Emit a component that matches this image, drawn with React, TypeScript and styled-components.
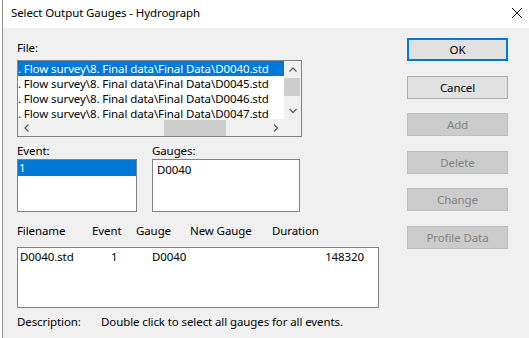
import React from "react";
import styled, { createGlobalStyle } from "styled-components";

const Global = createGlobalStyle`
  html, body { margin: 0; padding: 0; background: #ffffff; }
  body {
    font-family: "Noto Sans", "Open Sans", sans-serif;
    font-size: 11.5px;
    letter-spacing: -0.1px;
    color: #000;
  }
  * { box-sizing: border-box; }
`;

const Window = styled.div`
  width: 527px;
  height: 338px;
  margin-left: 2px;
  border-left: 1px solid #8f8f8f;
  display: flex;
  flex-direction: column;
  overflow: hidden;
`;

const TitleBar = styled.div`
  height: 28px;
  flex: 0 0 28px;
  background: #ffffff;
  display: flex;
  justify-content: space-between;
  align-items: flex-start;
  padding: 5px 7px 0 8px;
`;

const Title = styled.span`
  line-height: 16px;
`;

const CloseIcon = styled.svg`
  margin-top: 3px;
  width: 10px;
  height: 10px;
`;

const Body = styled.div`
  flex: 1;
  background: #f0f0f0;
  display: flex;
  padding-left: 14px;
`;

const ContentCol = styled.div`
  width: 362px;
  padding-top: 12px;
  display: flex;
  flex-direction: column;
`;

const ButtonCol = styled.div`
  width: 101px;
  margin-left: 28px;
  padding-top: 10px;
  display: flex;
  flex-direction: column;
  gap: 14px;
`;

const Label = styled.div<{ $mb?: number }>`
  height: 16px;
  line-height: 16px;
  margin-bottom: ${(p) => p.$mb ?? 0}px;
  white-space: nowrap;
`;

const ListFrame = styled.div<{ $w: number; $h: number }>`
  width: ${(p) => p.$w}px;
  height: ${(p) => p.$h}px;
  border: 1px solid #828282;
  background: #ffffff;
  overflow: hidden;
`;

const FileGrid = styled.div`
  display: grid;
  grid-template-columns: minmax(0, 1fr) 17px;
  grid-template-rows: minmax(0, 1fr) 17px;
  height: 100%;
`;

const Items = styled.div`
  overflow: hidden;
  min-width: 0;
`;

const Item = styled.div<{ $selected?: boolean; $h?: number; $pl?: number }>`
  height: ${(p) => p.$h ?? 15}px;
  line-height: ${(p) => p.$h ?? 15}px;
  padding-left: ${(p) => p.$pl ?? 0}px;
  white-space: nowrap;
  background: ${(p) => (p.$selected ? "#0078d7" : "transparent")};
  color: ${(p) => (p.$selected ? "#ffffff" : "#000000")};
`;

const VScroll = styled.div`
  background: #f0f0f0;
  display: flex;
  flex-direction: column;
`;

const HScroll = styled.div`
  background: #f0f0f0;
  display: flex;
`;

const Corner = styled.div`
  background: #f0f0f0;
`;

const ArrowBtn = styled.div`
  flex: 0 0 17px;
  width: 17px;
  height: 17px;
  display: flex;
  align-items: center;
  justify-content: center;
`;

const Track = styled.div`
  flex: 1;
  position: relative;
`;

const VThumb = styled.div<{ $offset: number; $size: number }>`
  position: absolute;
  left: 0;
  right: 1px;
  top: ${(p) => p.$offset}px;
  height: ${(p) => p.$size}px;
  background: #cdcdcd;
`;

const HThumb = styled.div<{ $offset: number; $size: number }>`
  position: absolute;
  top: 1px;
  bottom: 0;
  left: ${(p) => p.$offset}px;
  width: ${(p) => p.$size}px;
  background: #cdcdcd;
`;

const PairRow = styled.div`
  display: flex;
  gap: 15px;
  margin-top: 6px;
`;

const Group = styled.div`
  display: flex;
  flex-direction: column;
`;

const Padded = styled.div<{ $pt: number; $pl: number }>`
  padding-top: ${(p) => p.$pt}px;
  padding-left: ${(p) => p.$pl}px;
  line-height: 15px;
`;

const HeaderRow = styled.div`
  display: grid;
  grid-template-columns: 75px 44px 54px 82px auto;
  height: 16px;
  line-height: 16px;
  margin-top: 11px;
  margin-bottom: 8px;
  white-space: nowrap;
`;

const DataRow = styled.div`
  display: grid;
  grid-template-columns: 91px 41px 1fr auto;
  padding: 1px 14px 0 2px;
  line-height: 15px;
  white-space: nowrap;
`;

const Right = styled.span`
  text-align: right;
`;

const DescRow = styled.div`
  display: grid;
  grid-template-columns: 84px auto;
  margin-top: 6px;
  line-height: 16px;
  white-space: nowrap;
`;

const Button = styled.div<{ $kind: "default" | "normal" | "disabled" }>`
  height: 23px;
  flex: 0 0 23px;
  display: flex;
  align-items: center;
  justify-content: center;
  background: ${(p) => (p.$kind === "disabled" ? "#cccccc" : "#e1e1e1")};
  color: ${(p) => (p.$kind === "disabled" ? "#838383" : "#000000")};
  border: ${(p) =>
    p.$kind === "default"
      ? "2px solid #0078d7"
      : p.$kind === "disabled"
      ? "1px solid #bfbfbf"
      : "1px solid #adadad"};
  &:nth-child(even) {
    margin-top: 1px;
  }
`;

const Chevron: React.FC<{ dir: "up" | "down" | "left" | "right" }> = ({ dir }) => {
  const pts =
    dir === "up"
      ? "0.5,4.5 4,1 7.5,4.5"
      : dir === "down"
      ? "0.5,1 4,4.5 7.5,1"
      : dir === "left"
      ? "4.5,0.5 1,4 4.5,7.5"
      : "1,0.5 4.5,4 1,7.5";
  const vertical = dir === "up" || dir === "down";
  return (
    <svg width={vertical ? 8 : 6} height={vertical ? 6 : 8} viewBox={vertical ? "0 0 8 6" : "0 0 6 8"}>
      <polyline points={pts} fill="none" stroke="#606060" strokeWidth="1.3" />
    </svg>
  );
};

const files = ["D0040", "D0045", "D0046", "D0047"];

export default function App() {
  return (
    <>
      <Global />
      <Window>
        <TitleBar>
          <Title>Select Output Gauges - Hydrograph</Title>
          <CloseIcon viewBox="0 0 10 10">
            <line x1="0" y1="0" x2="10" y2="10" stroke="#000" strokeWidth="1" />
            <line x1="10" y1="0" x2="0" y2="10" stroke="#000" strokeWidth="1" />
          </CloseIcon>
        </TitleBar>
        <Body>
          <ContentCol>
            <Label $mb={4}>File:</Label>
            <ListFrame $w={285} $h={77}>
              <FileGrid>
                <Items>
                  {files.map((f, i) => (
                    <Item key={f} $selected={i === 0}>
                      . Flow survey\8. Final data\Final Data\{f}.std
                    </Item>
                  ))}
                </Items>
                <VScroll>
                  <ArrowBtn>
                    <Chevron dir="up" />
                  </ArrowBtn>
                  <Track>
                    <VThumb $offset={0} $size={18} />
                  </Track>
                  <ArrowBtn>
                    <Chevron dir="down" />
                  </ArrowBtn>
                </VScroll>
                <HScroll>
                  <ArrowBtn>
                    <Chevron dir="left" />
                  </ArrowBtn>
                  <Track>
                    <HThumb $offset={129} $size={62} />
                  </Track>
                  <ArrowBtn>
                    <Chevron dir="right" />
                  </ArrowBtn>
                </HScroll>
                <Corner />
              </FileGrid>
            </ListFrame>

            <PairRow>
              <Group>
                <Label>Event:</Label>
                <ListFrame $w={120} $h={53}>
                  <Item $selected $h={16} $pl={1}>
                    1
                  </Item>
                </ListFrame>
              </Group>
              <Group>
                <Label>Gauges:</Label>
                <ListFrame $w={148} $h={53}>
                  <Padded $pt={2} $pl={4}>D0040</Padded>
                </ListFrame>
              </Group>
            </PairRow>

            <HeaderRow>
              <span>Filename</span>
              <span>Event</span>
              <span>Gauge</span>
              <span>New Gauge</span>
              <span>Duration</span>
            </HeaderRow>
            <ListFrame $w={362} $h={61}>
              <DataRow>
                <span>D0040.std</span>
                <span>1</span>
                <span>D0040</span>
                <Right>148320</Right>
              </DataRow>
            </ListFrame>
            <DescRow>
              <span>Description:</span>
              <span>Double click to select all gauges for all events.</span>
            </DescRow>
          </ContentCol>
          <ButtonCol>
            <Button $kind="default">OK</Button>
            <Button $kind="normal">Cancel</Button>
            <Button $kind="disabled">Add</Button>
            <Button $kind="disabled">Delete</Button>
            <Button $kind="disabled">Change</Button>
            <Button $kind="disabled">Profile Data</Button>
          </ButtonCol>
        </Body>
      </Window>
    </>
  );
}
